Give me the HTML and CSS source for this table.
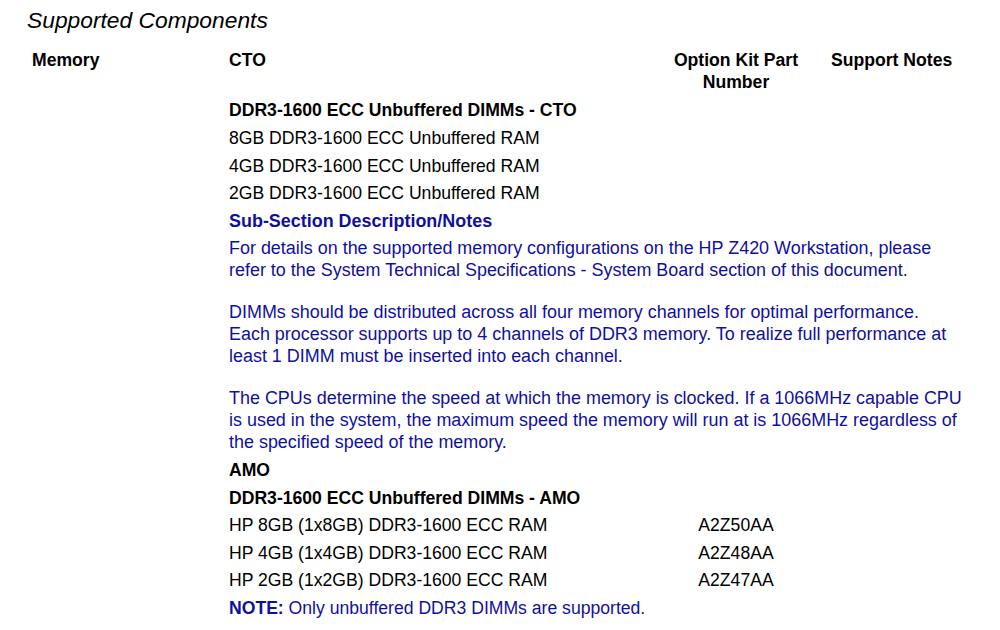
FILE: index.html
```html
<!DOCTYPE html>
<html>
<head>
<meta charset="utf-8">
<link rel="stylesheet" href="styles.css">
</head>
<body>
<h1 class="title">Supported Components</h1>
<div class="table">
  <div class="cell head">Memory</div>
  <div class="cell head">CTO</div>
  <div class="cell head center">Option Kit Part<br>Number</div>
  <div class="cell head notes">Support Notes</div>

  <div class="cell"></div>
  <div class="cell bold">DDR3-1600 ECC Unbuffered DIMMs - CTO</div>
  <div class="cell"></div>
  <div class="cell notes"></div>

  <div class="cell"></div>
  <div class="cell">8GB DDR3-1600 ECC Unbuffered RAM</div>
  <div class="cell"></div>
  <div class="cell notes"></div>

  <div class="cell"></div>
  <div class="cell">4GB DDR3-1600 ECC Unbuffered RAM</div>
  <div class="cell"></div>
  <div class="cell notes"></div>

  <div class="cell"></div>
  <div class="cell">2GB DDR3-1600 ECC Unbuffered RAM</div>
  <div class="cell"></div>
  <div class="cell notes"></div>

  <div class="cell"></div>
  <div class="cell span blue bold large">Sub-Section Description/Notes</div>

  <div class="cell"></div>
  <div class="cell span blue large">
    <p class="para">For details on the supported memory configurations on the HP Z420 Workstation, please<br>refer to the System Technical Specifications - System Board section of this document.</p>
    <p class="para">DIMMs should be distributed across all four memory channels for optimal performance.<br>Each processor supports up to 4 channels of DDR3 memory. To realize full performance at<br>least 1 DIMM must be inserted into each channel.</p>
    <p class="para">The CPUs determine the speed at which the memory is clocked. If a 1066MHz capable CPU<br>is used in the system, the maximum speed the memory will run at is 1066MHz regardless of<br>the specified speed of the memory.</p>
  </div>

  <div class="cell"></div>
  <div class="cell bold">AMO</div>
  <div class="cell"></div>
  <div class="cell notes"></div>

  <div class="cell"></div>
  <div class="cell bold">DDR3-1600 ECC Unbuffered DIMMs - AMO</div>
  <div class="cell"></div>
  <div class="cell notes"></div>

  <div class="cell"></div>
  <div class="cell">HP 8GB (1x8GB) DDR3-1600 ECC RAM</div>
  <div class="cell center">A2Z50AA</div>
  <div class="cell notes"></div>

  <div class="cell"></div>
  <div class="cell">HP 4GB (1x4GB) DDR3-1600 ECC RAM</div>
  <div class="cell center">A2Z48AA</div>
  <div class="cell notes"></div>

  <div class="cell"></div>
  <div class="cell">HP 2GB (1x2GB) DDR3-1600 ECC RAM</div>
  <div class="cell center">A2Z47AA</div>
  <div class="cell notes"></div>

  <div class="cell"></div>
  <div class="cell span blue"><b>NOTE:</b> Only unbuffered DDR3 DIMMs are supported.</div>
</div>
</body>
</html>
```

FILE: styles.css
```css
html, body {
  margin: 0;
  padding: 0;
  background: #ffffff;
}
body {
  font-family: "Liberation Sans", Arial, sans-serif;
  color: #000000;
  font-size: 17.6px;
}
.title {
  font-size: 22.8px;
  font-style: italic;
  font-weight: normal;
  margin: 0;
  padding: 6px 0 0 27px;
  line-height: 28px;
  height: 40px;
}
.table {
  display: grid;
  grid-template-columns: 197px 427px 160px 1fr;
  margin-left: 32px;
}
.cell {
  padding: 2.8px 0;
  line-height: 22px;
}
.head {
  font-weight: bold;
  padding-bottom: 3.8px;
}
.bold {
  font-weight: bold;
}
.large {
  font-size: 17.95px;
}
.center {
  text-align: center;
}
.notes {
  padding-left: 15px;
}
.span {
  grid-column: 2 / 5;
}
.blue {
  color: #10109e;
}
.para {
  margin: 0 0 20px 0;
}
.para:last-child {
  margin-bottom: 0;
}
```
